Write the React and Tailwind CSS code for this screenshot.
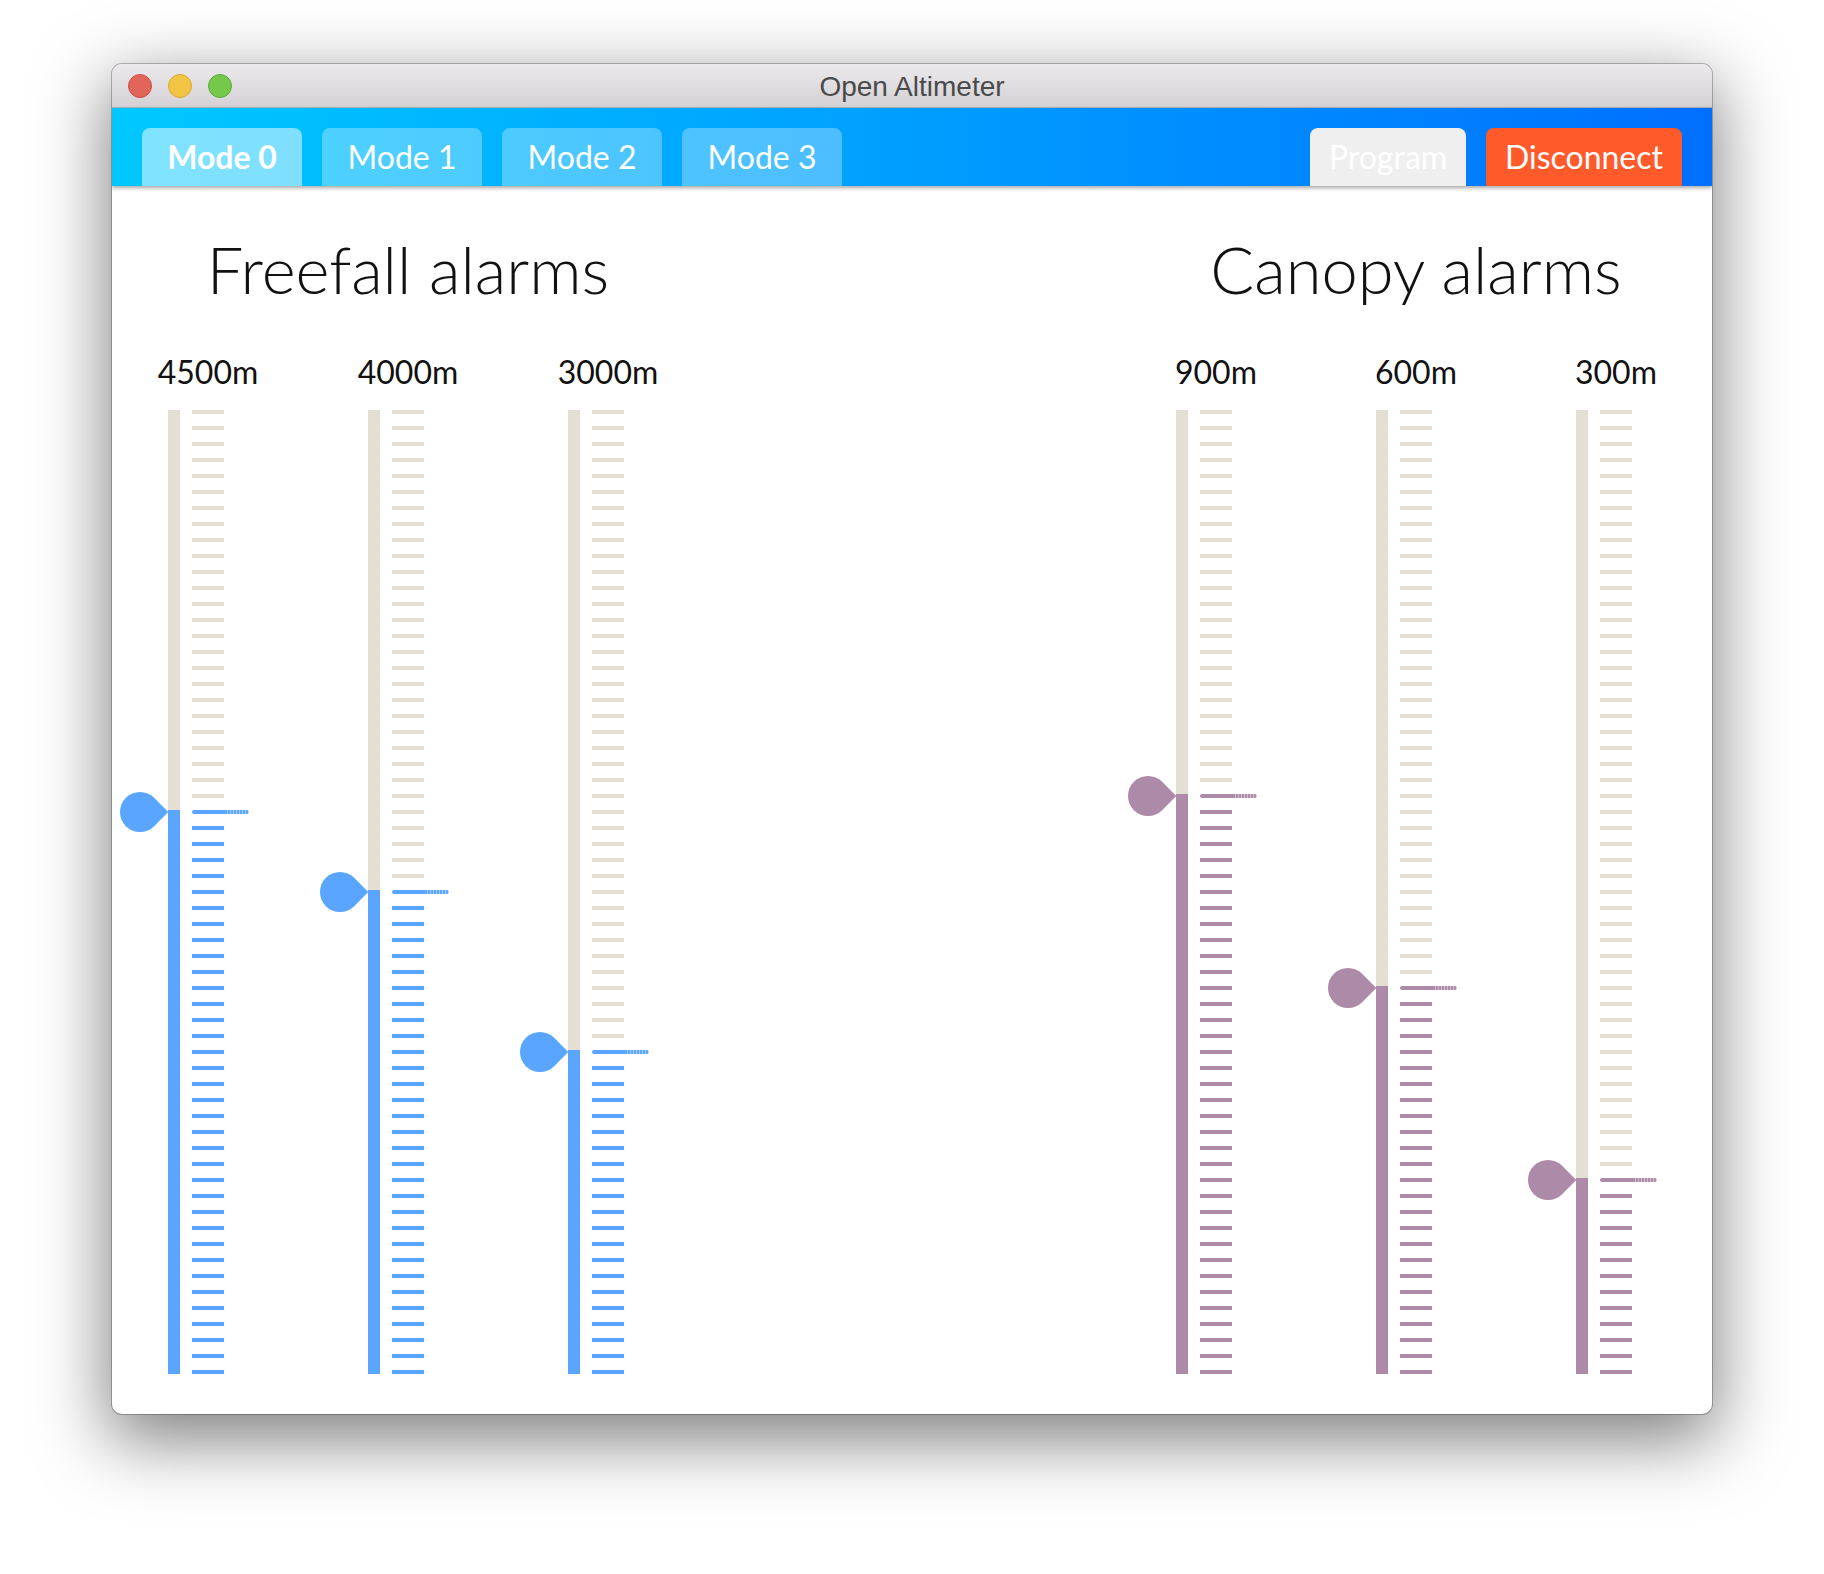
import React from "react";

const THEMES = {
  blue: {
    fill: "bg-[#5aa5ff]",
    knob: "bg-[#5aa5ff]",
    dots: "bg-[repeating-linear-gradient(90deg,#5aa5ff_0px,#5aa5ff_2px,#a9cdff_2px,#a9cdff_3px)]",
  },
  purple: {
    fill: "bg-[#ad8ba8]",
    knob: "bg-[#ad8ba8]",
    dots: "bg-[repeating-linear-gradient(90deg,#ad8ba8_0px,#ad8ba8_2px,#d3c2d0_2px,#d3c2d0_3px)]",
  },
};

const TICKS = 61;
const STEP = 16;
const TRACK_H = (TICKS - 1) * STEP + 4; // 964

function Slider({ idx, theme }) {
  const t = THEMES[theme];
  const top = idx * STEP;
  const ticks = [];
  for (let i = 0; i < TICKS; i++) {
    const active = i >= idx;
    if (i === idx) {
      ticks.push(
        <div key={i} className="flex h-[4px] w-[57px] shrink-0">
          <div className={`h-[4px] w-[33px] rounded-l-full ${t.fill}`} />
          <div className={`h-[4px] w-[24px] rounded-r-full ${t.dots}`} />
        </div>
      );
    } else {
      ticks.push(
        <div
          key={i}
          className={`h-[4px] w-[32px] shrink-0 ${active ? t.fill : "bg-[#e3dfd3]"}`}
        />
      );
    }
  }
  return (
    <div className="relative flex w-[80px] gap-[12px]" style={{ height: TRACK_H }}>
      <div className="flex h-full w-[12px] flex-col bg-[#e3dfd3]">
        <div className="flex-1" />
        <div className={t.fill} style={{ height: TRACK_H - top }} />
      </div>
      <div className="flex w-[32px] flex-col gap-[12px]">{ticks}</div>
      <div
        className={`absolute left-[-48px] h-[40px] w-[40px] rotate-45 rounded-full rounded-tr-none ${t.knob}`}
        style={{ top: top - 18 }}
      />
    </div>
  );
}

function Group({ title, items, theme }) {
  return (
    <div className="flex w-[592px] flex-col items-center">
      <h2 className="h-[65px] text-[65px] font-light leading-[65px] text-[#111] [font-family:Lato,'Open_Sans',sans-serif]">
        {title}
      </h2>
      <div className="mt-[55px] grid grid-cols-[192px_192px_192px] gap-[8px]">
        {items.map((it) => (
          <div key={it.label} className="flex flex-col items-center">
            <div className="h-[30px] text-[32px] leading-[30px] text-[#111] [font-family:Lato,sans-serif]">
              {it.label}
            </div>
            <div className="mt-[23px]">
              <Slider idx={it.idx} theme={theme} />
            </div>
          </div>
        ))}
      </div>
    </div>
  );
}

export default function App() {
  const freefall = [
    { label: "4500m", idx: 25 },
    { label: "4000m", idx: 30 },
    { label: "3000m", idx: 40 },
  ];
  const canopy = [
    { label: "900m", idx: 24 },
    { label: "600m", idx: 36 },
    { label: "300m", idx: 48 },
  ];
  return (
    <div className="min-h-[1574px] w-full bg-white pl-[112px] pr-[112px] pt-[64px] pb-[160px]">
      <div className="w-[1600px] overflow-hidden rounded-[10px] bg-white shadow-[0_22px_70px_4px_rgba(0,0,0,0.5)] ring-1 ring-black/25">
        {/* title bar */}
        <div className="grid h-[44px] grid-cols-[1fr_auto_1fr] items-center border-b border-[#b4b2b4] bg-linear-to-b from-[#ebe9eb] to-[#d4d2d4]">
          <div className="flex items-center gap-[16px] pl-[16px]">
            <div className="h-[24px] w-[24px] rounded-full border border-[#cf4f46] bg-[#e2655b]" />
            <div className="h-[24px] w-[24px] rounded-full border border-[#d9a832] bg-[#f2c443]" />
            <div className="h-[24px] w-[24px] rounded-full border border-[#5aab3a] bg-[#74c94c]" />
          </div>
          <div className="mt-[3px] text-[28px] leading-none text-[#4a4a4a] [font-family:'Liberation_Sans',Arial,sans-serif]">
            Open Altimeter
          </div>
          <div />
        </div>
        {/* toolbar */}
        <div className="relative z-10 flex h-[78px] items-end gap-[20px] bg-linear-to-r from-[#00c8ff] to-[#006fff] px-[30px] shadow-[0_2px_4px_rgba(0,0,0,0.35)] [font-family:Lato,sans-serif]">
          <div className="flex h-[58px] w-[160px] items-center justify-center rounded-t-[8px] bg-white/50 text-[32px] font-bold text-white">
            Mode 0
          </div>
          <div className="flex h-[58px] w-[160px] items-center justify-center rounded-t-[8px] bg-white/30 text-[32px] text-white">
            Mode 1
          </div>
          <div className="flex h-[58px] w-[160px] items-center justify-center rounded-t-[8px] bg-white/30 text-[32px] text-white">
            Mode 2
          </div>
          <div className="flex h-[58px] w-[160px] items-center justify-center rounded-t-[8px] bg-white/30 text-[32px] text-white">
            Mode 3
          </div>
          <div className="ml-auto flex h-[58px] w-[156px] items-center justify-center rounded-t-[8px] bg-[#efefef] text-[32px] text-white">
            Program
          </div>
          <div className="flex h-[58px] w-[196px] items-center justify-center rounded-t-[8px] bg-[#ff5a2a] text-[32px] text-white">
            Disconnect
          </div>
        </div>
        {/* content */}
        <div className="flex justify-between pt-[51px] pb-[40px]">
          <Group title="Freefall alarms" items={freefall} theme="blue" />
          <Group title="Canopy alarms" items={canopy} theme="purple" />
        </div>
      </div>
    </div>
  );
}
